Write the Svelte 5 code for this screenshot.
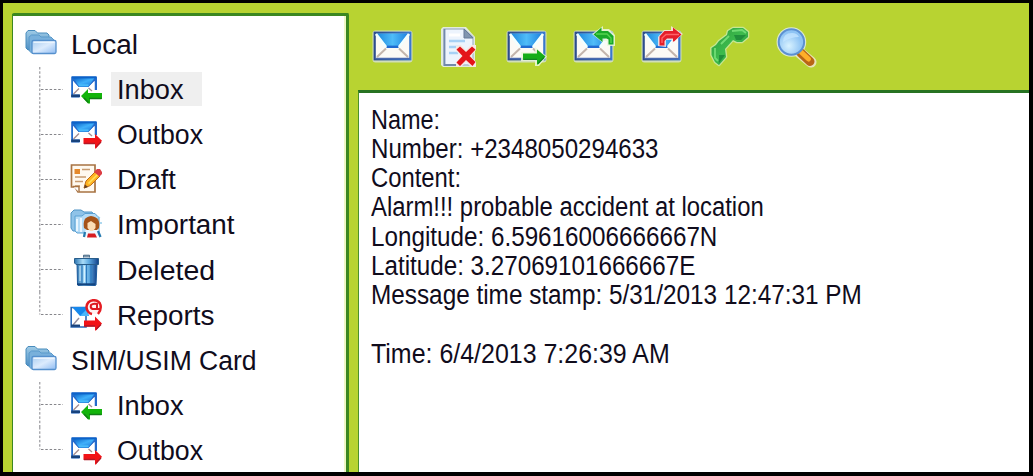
<script>
  const tree = [
    { label: 'Local', kind: 'folder', width: 67.5, root: true },
    { label: 'Inbox', kind: 'in', width: 66.5, selected: true },
    { label: 'Outbox', kind: 'out', width: 86 },
    { label: 'Draft', kind: 'draft', width: 59 },
    { label: 'Important', kind: 'important', width: 117.5 },
    { label: 'Deleted', kind: 'trash', width: 98 },
    { label: 'Reports', kind: 'report', width: 98, last: true },
    { label: 'SIM/USIM Card', kind: 'folder', width: 185.5, root: true },
    { label: 'Inbox', kind: 'in', width: 66.5 },
    { label: 'Outbox', kind: 'out', width: 86, last: true }
  ];
  const tools = ['new', 'delete', 'send', 'reply', 'forward', 'call', 'search'];
  const message = [
    ['Name:', 69.5],
    ['Number: +2348050294633', 287.5],
    ['Content:', 90],
    ['Alarm!!! probable accident at location', 392.5],
    ['Longitude: 6.59616006666667N', 346.5],
    ['Latitude: 3.27069101666667E', 324.5],
    ['Message time stamp: 5/31/2013 12:47:31 PM', 491],
    ['', 0],
    ['Time: 6/4/2013 7:26:39 AM', 298.5]
  ];

  function fit(node, width) {
    if (width) node.style.transform = `scaleX(${width / node.offsetWidth})`;
  }
</script>

<svg class="defs" width="0" height="0" aria-hidden="true">
  <defs>
    <linearGradient id="fold" x1="0" x2="1" y2="1"><stop stop-color="#a9cdf0" /><stop offset=".5" stop-color="#dcebfd" /><stop offset="1" stop-color="#8fbcf2" /></linearGradient>
    <linearGradient id="foldBack" x2="0" y2="1"><stop stop-color="#9fcbe6" /><stop offset="1" stop-color="#4d8fc4" /></linearGradient>
    <linearGradient id="flap" x2="1" y2="1"><stop stop-color="#0a62c8" /><stop offset=".5" stop-color="#3fb0fa" /><stop offset="1" stop-color="#1673d8" /></linearGradient>
    <linearGradient id="sky" x2="1"><stop stop-color="#1b86dc" /><stop offset=".5" stop-color="#4fbcf8" /><stop offset="1" stop-color="#1b7ede" /></linearGradient>
    <linearGradient id="edge" x2="1"><stop stop-color="#2d4d8c" /><stop offset="1" stop-color="#3a78cc" /></linearGradient>
    <linearGradient id="bin" x2="1"><stop stop-color="#2a72ae" /><stop offset=".35" stop-color="#a9dcf8" /><stop offset=".6" stop-color="#5fabe2" /><stop offset="1" stop-color="#123f88" /></linearGradient>
    <linearGradient id="phone" x2="1" y2="1"><stop stop-color="#2c9a3c" /><stop offset=".5" stop-color="#3dbb4d" /><stop offset="1" stop-color="#157a2c" /></linearGradient>
    <radialGradient id="lens" cx=".4" cy=".65"><stop stop-color="#d8f2ff" /><stop offset="1" stop-color="#8fc4f4" /></radialGradient>
  </defs>
</svg>

{#snippet smallMail()}
  <rect x="1.5" y="4.5" width="24.5" height="19" fill="#fff" />
  <path d="M1.2 3.5H27V17H24.5V8L19 14H8L3 8V21.5H9.5V24.5H1.2Z" fill="#246bcc" />
  <path d="M3 8L8.5 14H18.5L24.5 8V17H20L18 15H9L3 21Z" fill="#fff" />
  <path d="M3.5 5H24.5L18.5 13.5H9Z" fill="url(#flap)" />
  <path d="M9 12.3H18.5" stroke="#49bbfa" stroke-width="2" />
  <path d="M2 4.4H26" stroke="#0c62c8" stroke-width="2" />
  <path d="M3.5 21L9 15.5M18.5 15L22 18" stroke="#a58f93" stroke-width="1.4" />
  <path d="M1.2 22.8H10" stroke="#17427c" stroke-width="2.6" />
{/snippet}

{#snippet treeIcon(kind)}
  <svg class="small" viewBox="0 0 32 32">
    {#if kind === 'folder'}
      <path d="M1 5L3 2.5H10L12.5 5H22L24 7V22H3L1 20Z" fill="url(#foldBack)" stroke="#498cbd" />
      <path d="M4 9L6.5 7H14L16 9H26L29 12V22L27 25.5H7L4.5 23Z" fill="#78b0db" stroke="#5b9acb" />
      <rect x="7" y="12.5" width="24" height="13" rx="1.5" fill="url(#fold)" stroke="#5590cd" stroke-width="1.3" />
      <path d="M8.5 14.2H29.5" stroke="#eef6ff" stroke-width="1.4" />
    {:else if kind === 'in'}
      {@render smallMail()}
      <path d="M11 23L18 16V20H32V26H20V30.5H18Z" fill="#12b40a" />
      <path d="M19 25.5H31.5M14 25L18.5 29.5" stroke="#117b16" stroke-width="1.4" />
    {:else if kind === 'out'}
      {@render smallMail()}
      <path d="M13.5 20H25V16L32 22.8L26 30.5H25V26H13.5Z" fill="#f21317" />
      <path d="M14 25.5H25M26 29L31 24" stroke="#b51825" stroke-width="1.4" />
    {:else if kind === 'draft'}
      <path d="M1.5 2H25V29H8L5 24H1.5Z" fill="#fff9ef" stroke="#a87343" stroke-width="1.7" />
      <path d="M4.5 6H10V11H4.5Z" fill="#e5892b" />
      <path d="M12 6.5H20M5 14H16M5 18.5H13M5 23H10" stroke="#c79b70" stroke-width="1.6" />
      <path d="M3 23.5H9V29" fill="#fff" stroke="#a87343" stroke-width="1.4" />
      <path d="M14 25L16 18L25.5 8.5L30 13L20.5 22.5Z" fill="#ffb321" stroke="#bc6a15" />
      <path d="M18.5 20.5L27.5 11.5" stroke="#ffe15c" stroke-width="1.6" />
      <path d="M24 9L27 6H30L32 9V11L29.5 13.5Z" fill="#dc3d43" />
      <path d="M14 25.5L15 21.5L18 24Z" fill="#684020" />
    {:else if kind === 'important'}
      <path d="M1 5L4 2H11L14 4H22L24 7V23H3L1 20Z" fill="#8fc3e8" stroke="#4e93c4" />
      <path d="M5 8H12L15 5.5H25L29 10V25H7L5 23Z" fill="#b5dcf7" stroke="#5ba1d4" />
      <path d="M7 11V23M11 10V24" stroke="#e9f6ff" stroke-width="2" />
      <path d="M27 8L30 10M30 15H32" stroke="#93cbea" stroke-width="1.3" />
      <path d="M14 28L16 21H28L31 28Z" fill="#eef7ff" />
      <path d="M14 20Q12 9 21 8Q31 9 29 20L27 22H17Z" fill="#a65319" />
      <path d="M17.5 15L21 13L25.5 16V20L23 23H20L17.5 20Z" fill="#fbdcb5" />
      <path d="M15 24L14 29M28 23L30.5 29" stroke="#277bb0" stroke-width="2.3" />
      <path d="M18 25.5H25L27 29.5H17Z" fill="#d71c20" />
    {:else if kind === 'trash'}
      <path d="M7 9H27L26 31L24 32H9L7.5 30Z" fill="url(#bin)" stroke="#1c5a9c" />
      <path d="M12 11V29M16.5 11V30M21 11V29" stroke="#2c7abf" stroke-width="1.2" />
      <path d="M10 12V27M14.5 12V28" stroke="#d4f0ff" />
      <path d="M4.5 4.5H28.5V10.5H6L4.5 9Z" fill="url(#bin)" stroke="#285d8b" />
      <path d="M13.5 3.5V1.2H19.5V3.5" fill="#7c95aa" stroke="#4f6e8a" />
      <path d="M7 30.3H25" stroke="#124480" stroke-width="2" />
    {:else}
      <path d="M1.2 8.5H16V28H1.2Z" fill="#fff" stroke="#2867b7" stroke-width="1.6" />
      <path d="M2 8H16L19 17H10Z" fill="#1688ec" />
      <path d="M10 17L16 11L19 17Z" fill="#4ab7fa" />
      <path d="M3 26L9 19" stroke="#928c9d" stroke-width="1.4" />
      <path d="M1 26.7H10" stroke="#17427c" stroke-width="2.3" />
      <path d="M28 15Q31.5 11 30.5 6Q29 1 23 1.2Q17 2 16.5 8Q17 14 22 15" fill="#fff0f0" stroke="#e51c22" stroke-width="2.5" />
      <path d="M26.5 10H22.5Q20 9 21 6Q23 4 27 5V10H30" fill="none" stroke="#dd1820" stroke-width="2" />
      <path d="M14 21.5H25V17.5L32 24.5L26 31.5H25V27.5H14Z" fill="#f21317" />
      <path d="M14 27H25M26 30.5L31 25.5" stroke="#ad1728" stroke-width="1.3" />
    {/if}
  </svg>
{/snippet}

{#snippet bigMail()}
  <rect x="1.5" y="5.5" width="40" height="32" rx="3" fill="#d5dfd0" opacity=".85" />
  <rect x="3.7" y="7.7" width="35.6" height="26.6" fill="#fcfaf5" stroke="url(#edge)" stroke-width="2.2" />
  <path d="M5 8.5H38L27 22H16Z" fill="url(#sky)" />
  <path d="M15.5 21.8H27.5" stroke="#206bd1" stroke-width="2.4" />
  <path d="M5 9L15 22M38 9L28 22" stroke="#f2ffff" stroke-width="2.6" />
  <path d="M6 32L15 23.5M37 32L28 23.5" stroke="#c3b5ac" stroke-width="2" />
  <path d="M4.5 33.5H39" stroke="#4a69ad" stroke-width="1.5" />
{/snippet}

{#snippet toolIcon(kind)}
  <svg class="large" viewBox="0 0 44 44">
    {#if kind === 'new'}
      {@render bigMail()}
    {:else if kind === 'delete'}
      <path d="M3 4L5 2H28L37 12V42H5L3 40Z" fill="#e7edf0" opacity=".9" />
      <path d="M6 4H26L35 12V40H6Z" fill="#edf4fd" stroke="#aab9cd" stroke-width="1.3" />
      <path d="M6.5 4V40H20" fill="none" stroke="#7289ab" stroke-width="1.8" />
      <path d="M26 4V13H35Z" fill="#8095af" stroke="#667b99" />
      <path d="M11 10H22" stroke="#fff" stroke-width="3" />
      <path d="M11 16H27M11 22H23M11 28H20" stroke="#a7d1f5" stroke-width="2.4" />
      <path d="M18 21L23 20L28 25L33 20H38V25L33 31L38 37V42H33L28 37L23 42H18V37L23 31L18 26Z" fill="#f6e8e2" />
      <path d="M18.5 24.5L22 21.5L28 27L34 21.5L37.5 24.5L31.5 31L37.5 37L34.5 41L28 35L22 41L18.5 37.5L24.5 31Z" fill="#e41419" />
    {:else if kind === 'send'}
      {@render bigMail()}
      <path d="M16 27H30V22L42 31.5L34 41H30V36H16Z" fill="#eef8dd" opacity=".85" />
      <path d="M18 28.5H32V24.5L40.5 31.5L33 39.5H32V35H18Z" fill="#16ad18" />
      <path d="M19 34.3H32M33 38.5L39 32.5" stroke="#118321" stroke-width="1.3" />
    {:else if kind === 'reply'}
      {@render bigMail()}
      <path d="M20 9L31 1V4H37L43 10V21H35V16H31V18Z" fill="#ebf7df" opacity=".85" />
      <path d="M21.5 9.5L29.5 2.5V6H36L41.5 11V19.5H36.5V14.5L34.5 13.5H30.5V17Z" fill="#18a928" />
      <path d="M24 9H35L39 13V18" fill="none" stroke="#54d34d" stroke-width="1.4" />
    {:else if kind === 'forward'}
      {@render bigMail()}
      <path d="M18 21V12L24 5H31V1L43 9L32 18V15H26V22Z" fill="#fae8e5" opacity=".85" />
      <path d="M19.5 20.5V11.5L24.5 6H33V2.5L41.5 9.5L34 16.5H33V13.5H27L24.5 16V20.5Z" fill="#e51e29" />
      <path d="M22 18V13L26 9.5H39" fill="none" stroke="#ff6268" stroke-width="1.4" />
    {:else if kind === 'call'}
      <path d="M21 6L26 3H36L41 7V12L35 17H30L26 15L18 24L19 32L12 40L8 37L4.5 30V23L9 20L12 16L20 10Z" fill="url(#phone)" stroke="#c6e693" stroke-width="2.6" stroke-linejoin="round" />
      <path d="M21 6L26 3H36L41 7V12L35 17H30L26 15L18 24L19 32L12 40L8 37L4.5 30V23L9 20L12 16L20 10Z" fill="url(#phone)" />
      <path d="M25 6L35 5L39 8M8 23V33L11 36M22 11L14 19" fill="none" stroke="#70dc75" stroke-width="1.8" />
      <path d="M27 10H39L34 15H29ZM12 30H18L12 38Z" fill="#167d35" opacity=".7" />
    {:else}
      <path d="M26 28L37 37" stroke="#e8e5b7" stroke-width="11" stroke-linecap="round" />
      <circle cx="17.4" cy="17" r="14.8" fill="#dce9d4" />
      <path d="M27 28L36 36.5" stroke="#b86616" stroke-width="9" stroke-linecap="round" />
      <path d="M27 27L34.5 34" stroke="#ffae28" stroke-width="5" stroke-linecap="round" />
      <circle cx="17.4" cy="17" r="12.7" fill="url(#lens)" stroke="#5c90d2" stroke-width="2" />
      <path d="M9 17Q9 8 18 8Q23 8 25 12Q17 12 9 17Z" fill="#c4e5ff" opacity=".8" />
    {/if}
  </svg>
{/snippet}

<main>
  <nav>
    {#each tree as item}
      <div class="row" class:child={!item.root}>
        {#if !item.root}
          <svg class="branch" viewBox="0 0 24 45.1">
            <path d={item.last ? 'M.8 0V22.5' : 'M.8 0V45.1'} />
            <path d="M2 22.5H24" />
          </svg>
        {/if}
        {@render treeIcon(item.kind)}
        <div class="label" class:selected={item.selected}><span use:fit={item.width}>{item.label}</span></div>
      </div>
    {/each}
  </nav>
  <section>
    <header>
      {#each tools as tool}{@render toolIcon(tool)}{/each}
    </header>
    <article>
      {#each message as [text, width]}
        <div class="line"><span use:fit={width}>{text}</span></div>
      {/each}
    </article>
  </section>
</main>

<style>
  :global(body) { margin: 0; background: #000; overflow: hidden; }
  .defs { display: block; }
  main {
    box-sizing: border-box;
    width: 1033px;
    height: 476px;
    display: grid;
    grid-template-columns: 337px 1fr;
    column-gap: 9px;
    padding-left: 9px;
    border: solid #000;
    border-width: 3px 4px 4px 3px;
    background: #b8d331;
    color: #100c1c;
    font-family: "Liberation Sans", Arial, sans-serif;
    overflow: hidden;
  }
  nav {
    box-sizing: border-box;
    height: 459px;
    margin-top: 10px;
    padding-top: 5.5px;
    border: solid #3b8721;
    border-width: 3px 3px 0 1px;
    border-radius: 2px 2px 0 0;
    background: #fff;
    box-shadow: inset -2px 0 #f0f7c6;
    overflow: hidden;
  }
  .row {
    height: 45.1px;
    display: flex;
    align-items: center;
    padding-left: 12px;
  }
  .row.child { padding-left: 26px; }
  .branch { width: 24px; height: 45.1px; margin-right: 7px; flex: none; }
  .branch path { fill: none; stroke: #85858a; stroke-width: 1; stroke-dasharray: 2.5 1.8; }
  .small { width: 32px; height: 32px; flex: none; }
  .label {
    height: 34px;
    margin-left: 9px;
    padding-left: 6.2px;
    font-size: 27px;
    line-height: 36px;
    white-space: pre;
  }
  .row:not(.child) .label { margin-left: 8px; }
  .label.selected { width: 84.8px; background: #efefef; }
  span { display: inline-block; transform-origin: 0 50%; white-space: pre; }
  section { display: grid; grid-template-rows: 87px 1fr; min-width: 0; }
  header {
    display: flex;
    align-items: center;
    gap: 23.3px;
    padding-left: 12.5px;
    padding-top: 1px;
  }
  .large { width: 44px; height: 44px; flex: none; }
  article {
    padding: 12.5px 0 0 12.3px;
    border-top: 3px solid #277322;
    border-left: 1px solid #4b912b;
    background: #fff;
    font-size: 27px;
  }
  .line { height: 29.3px; line-height: 29.3px; }
</style>
